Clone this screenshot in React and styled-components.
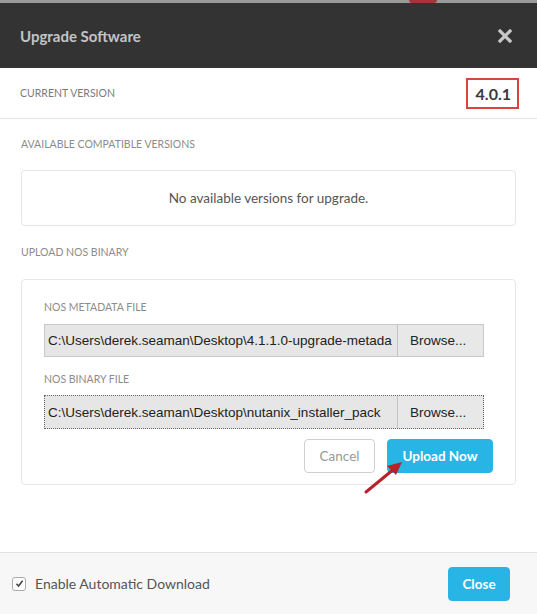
import React from "react";
import styled, { createGlobalStyle } from "styled-components";

const Global = createGlobalStyle`
  html, body {
    margin: 0;
    padding: 0;
    background: #fff;
    font-family: Lato, "Open Sans", sans-serif;
  }
`;

const Page = styled.div`
  position: relative;
  width: 537px;
  height: 614px;
  display: flex;
  flex-direction: column;
  overflow: hidden;
`;

const TopStrip = styled.div`
  height: 3px;
  background: #9a9a9a;
  display: flex;
  padding-left: 409px;
`;

const Blob = styled.span`
  width: 28px;
  height: 3px;
  background: #a8333b;
  border-radius: 0 0 6px 6px;
`;

const Header = styled.header`
  height: 65px;
  background: #333333;
  display: flex;
  align-items: center;
  justify-content: space-between;
  padding: 0 25px 0 20px;
`;

const Title = styled.h1`
  margin: 0;
  font-size: 15px;
  font-weight: 700;
  color: #c4c4c4;
`;

const CloseX = styled.svg`
  width: 14px;
  height: 14px;
`;

const Row = styled.div`
  height: 50px;
  border-bottom: 1px solid #e6e6e6;
  display: flex;
  align-items: center;
  justify-content: space-between;
  padding: 0 18px 0 20px;
`;

const Label = styled.div`
  font-size: 10.5px;
  color: ${(p) => p.$color || "#8c8c8c"};
  text-transform: uppercase;
  line-height: 13px;
  margin: ${(p) => p.$margin || "0"};
`;

const Version = styled.div`
  border: 2px solid #d9443f;
  padding: 4px 6px 4px 8px;
  font-size: 16px;
  font-weight: 700;
  color: #3a3a3a;
  line-height: 19px;
`;

const Body = styled.main`
  padding: 0 21px;
  display: flex;
  flex-direction: column;
  flex: 1;
`;

const Card = styled.div`
  border: 1px solid #e6e6e6;
  border-radius: 4px;
  box-sizing: border-box;
`;

const EmptyCard = styled(Card)`
  height: 56px;
  display: flex;
  align-items: center;
  justify-content: center;
  font-size: 13.5px;
  color: #555;
`;

const UploadCard = styled(Card)`
  height: 206px;
  padding: 21px 22px 0 22px;
  display: flex;
  flex-direction: column;
`;

const FileInput = styled.div`
  width: 440px;
  height: ${(p) => (p.$focused ? "34px" : "33px")};
  display: flex;
  box-sizing: border-box;
  border: 1px ${(p) => (p.$focused ? "dotted #666" : "solid #c9c9c9")};
  background: #e6e6e6;
  font-family: "Liberation Sans", Arial, sans-serif;
  font-size: 13.5px;
  color: #222;
`;

const FilePath = styled.div`
  flex: 1;
  white-space: nowrap;
  padding-left: 3px;
  display: flex;
  align-items: center;
`;

const Browse = styled.div`
  width: 86px;
  border-left: 1px solid #c4c4c4;
  display: flex;
  align-items: center;
  padding-left: 12px;
  box-sizing: border-box;
  background: #e8e8e8;
`;

const Actions = styled.div`
  display: flex;
  justify-content: flex-end;
  gap: 12px;
  margin-top: 10px;
`;

const Button = styled.button`
  height: 34px;
  box-sizing: border-box;
  border-radius: 4px;
  font-family: Lato, "Open Sans", sans-serif;
  font-size: 13.5px;
  padding: 0;
  width: ${(p) => p.$w}px;
  border: 1px solid ${(p) => (p.$primary ? "#29b4e6" : "#cfcfcf")};
  background: ${(p) => (p.$primary ? "#29b4e6" : "#fff")};
  color: ${(p) => (p.$primary ? "#fff" : "#999")};
  font-weight: ${(p) => (p.$primary ? 700 : 400)};
`;

const Footer = styled.footer`
  height: 62px;
  box-sizing: border-box;
  border-top: 1px solid #e3e3e3;
  background: #f7f7f7;
  display: flex;
  align-items: center;
  justify-content: space-between;
  padding: 0 27px 0 12px;
`;

const Check = styled.label`
  display: flex;
  align-items: center;
  gap: 9px;
  font-size: 14px;
  color: #555;
`;

const Box = styled.span`
  width: 12px;
  height: 12px;
  border: 1px solid #aaa;
  border-radius: 3px;
  background: #fff;
  display: flex;
  align-items: center;
  justify-content: center;
`;

const Arrow = styled.svg`
  position: absolute;
  left: 360px;
  top: 455px;
  width: 50px;
  height: 45px;
`;

export default function App() {
  return (
    <Page>
      <Global />
      <TopStrip>
        <Blob />
      </TopStrip>
      <Header>
        <Title>Upgrade Software</Title>
        <CloseX viewBox="0 0 14 14">
          <path d="M2 2 L12 12 M12 2 L2 12" stroke="#c8c8c8" strokeWidth="3.2" strokeLinecap="square" />
        </CloseX>
      </Header>
      <Row>
        <Label $color="#7a7a7a">Current Version</Label>
        <Version>4.0.1</Version>
      </Row>
      <Body>
        <Label $margin="19px 0 19px 0">Available Compatible Versions</Label>
        <EmptyCard>No available versions for upgrade.</EmptyCard>
        <Label $margin="20px 0 20px 0">Upload NOS Binary</Label>
        <UploadCard>
          <Label $margin="0 0 10px 0">NOS Metadata File</Label>
          <FileInput>
            <FilePath>C:\Users\derek.seaman\Desktop\4.1.1.0-upgrade-metada</FilePath>
            <Browse>Browse...</Browse>
          </FileInput>
          <Label $margin="16px 0 9px 0">NOS Binary File</Label>
          <FileInput $focused>
            <FilePath>C:\Users\derek.seaman\Desktop\nutanix_installer_pack</FilePath>
            <Browse>Browse...</Browse>
          </FileInput>
          <Actions>
            <Button $w={71}>Cancel</Button>
            <Button $w={106} $primary>Upload Now</Button>
          </Actions>
        </UploadCard>
      </Body>
      <Footer>
        <Check>
          <Box>
            <svg width="9" height="9" viewBox="0 0 9 9">
              <path d="M1.5 4.8 L3.6 7 L7.6 1.8" fill="none" stroke="#444" strokeWidth="1.6" />
            </svg>
          </Box>
          Enable Automatic Download
        </Check>
        <Button $w={62} $primary>Close</Button>
      </Footer>
      <Arrow viewBox="0 0 50 45">
        <path d="M6 37 L34 14" stroke="#b8232b" strokeWidth="3" strokeLinecap="round" />
        <path d="M42 7 L27 11 L36 20 Z" fill="#b8232b" />
      </Arrow>
    </Page>
  );
}
